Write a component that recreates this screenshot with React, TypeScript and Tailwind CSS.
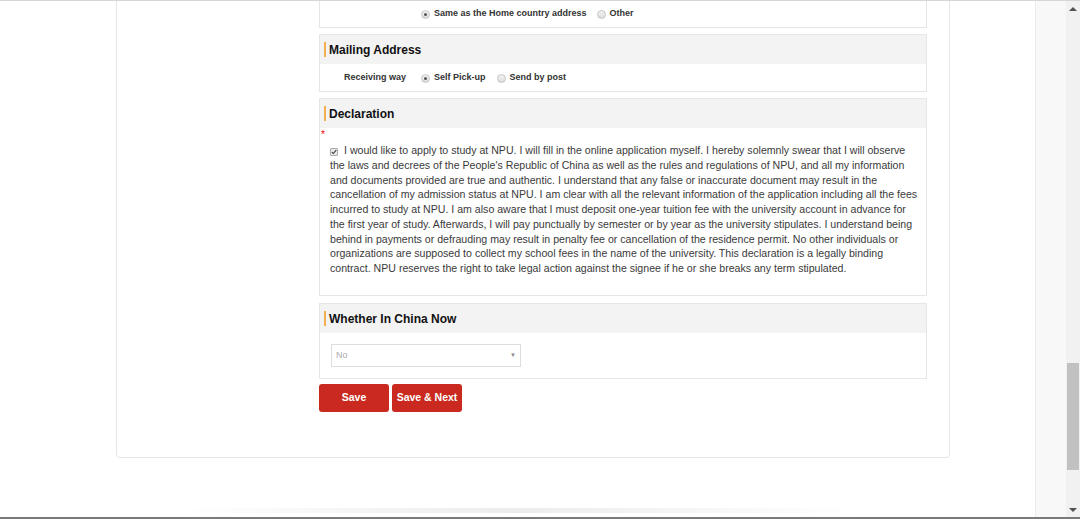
import React from "react";

const font = { fontFamily: '"Liberation Sans", Arial, sans-serif' };

const Radio: React.FC<{ checked?: boolean }> = ({ checked }) => (
  <span className="inline-flex items-center justify-center w-[9px] h-[9px] rounded-full border border-[#c4c4c4] bg-gradient-to-b from-[#f4f4f4] to-[#dcdcdc] mr-[4px] align-middle">
    {checked && <span className="w-[3px] h-[3px] rounded-full bg-[#555]" />}
  </span>
);

const SectionHeader: React.FC<{ title: string }> = ({ title }) => (
  <div className="flex items-center h-[29px] bg-[#f3f3f3] pl-[4px]">
    <span className="w-[2px] h-[15px] bg-[#f0b050] mr-[3px]" />
    <span className="text-[12px] font-bold text-[#111]">{title}</span>
  </div>
);

const declaration =
  "I would like to apply to study at NPU. I will fill in the online application myself. I hereby solemnly swear that I will observe the laws and decrees of the People's Republic of China as well as the rules and regulations of NPU, and all my information and documents provided are true and authentic. I understand that any false or inaccurate document may result in the cancellation of my admission status at NPU. I am clear with all the relevant information of the application including all the fees incurred to study at NPU. I am also aware that I must deposit one-year tuition fee with the university account in advance for the first year of study. Afterwards, I will pay punctually by semester or by year as the university stipulates. I understand being behind in payments or defrauding may result in penalty fee or cancellation of the residence permit. No other individuals or organizations are supposed to collect my school fees in the name of the university. This declaration is a legally binding contract. NPU reserves the right to take legal action against the signee if he or she breaks any term stipulated.";

export default function App() {
  return (
    <div className="w-[1080px] h-[519px] flex flex-col bg-white overflow-hidden" style={font}>
      <div className="flex h-[517px] border-t border-[#d6d6d6]">
        {/* main page */}
        <div className="w-[1035px] flex flex-col">
          <div className="ml-[116px] w-[834px] border border-t-0 border-[#e6e6e6] rounded-b-[4px] pl-[202px] pr-[22px] pb-[45px]">
            {/* partial address section */}
            <div className="h-[27px] border border-t-0 border-[#e6e6e6] flex items-center pl-[101px] text-[9px] font-bold text-[#333]">
              <Radio checked />
              <span className="mr-[10px]">Same as the Home country address</span>
              <Radio />
              <span>Other</span>
            </div>

            {/* Mailing Address */}
            <div className="mt-[6px] border border-[#e6e6e6]">
              <SectionHeader title="Mailing Address" />
              <div className="h-[27px] flex items-center pl-[24px] pt-[1px] text-[9px] font-bold text-[#333]">
                <span className="mr-[15px]">Receiving way</span>
                <Radio checked />
                <span className="mr-[11px]">Self Pick-up</span>
                <Radio />
                <span>Send by post</span>
              </div>
            </div>

            {/* Declaration */}
            <div className="mt-[6px] border border-[#e6e6e6]">
              <SectionHeader title="Declaration" />
              <div className="h-[167px] pl-[1px] pr-[6px]">
                <div className="h-[12px] text-[#e00] text-[10px] leading-[12px] pt-[1px]">*</div>
                <p className="pl-[9px] pt-[3px] text-[10.6px] leading-[14.75px] text-[#3a3a3a]">
                  <span className="inline-flex items-center justify-center w-[8px] h-[8px] border border-[#aaa] rounded-[1px] bg-[#e8e8e8] mr-[6px] align-[-1px]">
                    <svg viewBox="0 0 8 8" className="w-[6px] h-[6px]">
                      <path d="M1 4 L3 6 L7 1.5" fill="none" stroke="#333" strokeWidth={1.4} />
                    </svg>
                  </span>
                  {declaration}
                </p>
              </div>
            </div>

            {/* Whether In China Now */}
            <div className="mt-[7px] border border-[#e6e6e6]">
              <SectionHeader title="Whether In China Now" />
              <div className="h-[45px] pt-[11px] pl-[11px]">
                <div className="w-[190px] h-[23px] border border-[#dedede] flex items-center justify-between px-[4px] text-[9px] text-[#aaa]">
                  <span>No</span>
                  <span className="text-[6px] text-[#888]">▼</span>
                </div>
              </div>
            </div>

            {/* Buttons */}
            <div className="mt-[5px] flex gap-[3px]">
              <button className="w-[70px] h-[28px] rounded-[3px] bg-[#c9291e] text-white text-[10.5px] font-bold">
                Save
              </button>
              <button className="w-[70px] h-[28px] rounded-[3px] bg-[#c9291e] text-white text-[10.5px] font-bold">
                Save &amp; Next
              </button>
            </div>
          </div>
          <div className="flex-1" />
          <div className="h-[5px] mb-[4px] mx-[180px] bg-gradient-to-r from-transparent via-[#ececec] to-transparent" />
        </div>

        {/* right gutter */}
        <div className="w-[31px] bg-[#f8f8f8] border-l border-[#ececec]" />

        {/* scrollbar */}
        <div className="w-[14px] bg-[#f1f1f1] flex flex-col items-center">
          <div className="h-[16px] flex items-center justify-center">
            <span className="w-0 h-0 border-l-[4px] border-r-[4px] border-b-[4px] border-l-transparent border-r-transparent border-b-[#505050]" />
          </div>
          <div className="h-[346px]" />
          <div className="w-[12px] h-[107px] bg-[#c1c1c1]" />
          <div className="flex-1" />
          <div className="h-[14px] flex items-center justify-center">
            <span className="w-0 h-0 border-l-[4px] border-r-[4px] border-t-[4px] border-l-transparent border-r-transparent border-t-[#505050]" />
          </div>
        </div>
      </div>
      <div className="h-[2px] bg-[#7a7a7a]" />
    </div>
  );
}
